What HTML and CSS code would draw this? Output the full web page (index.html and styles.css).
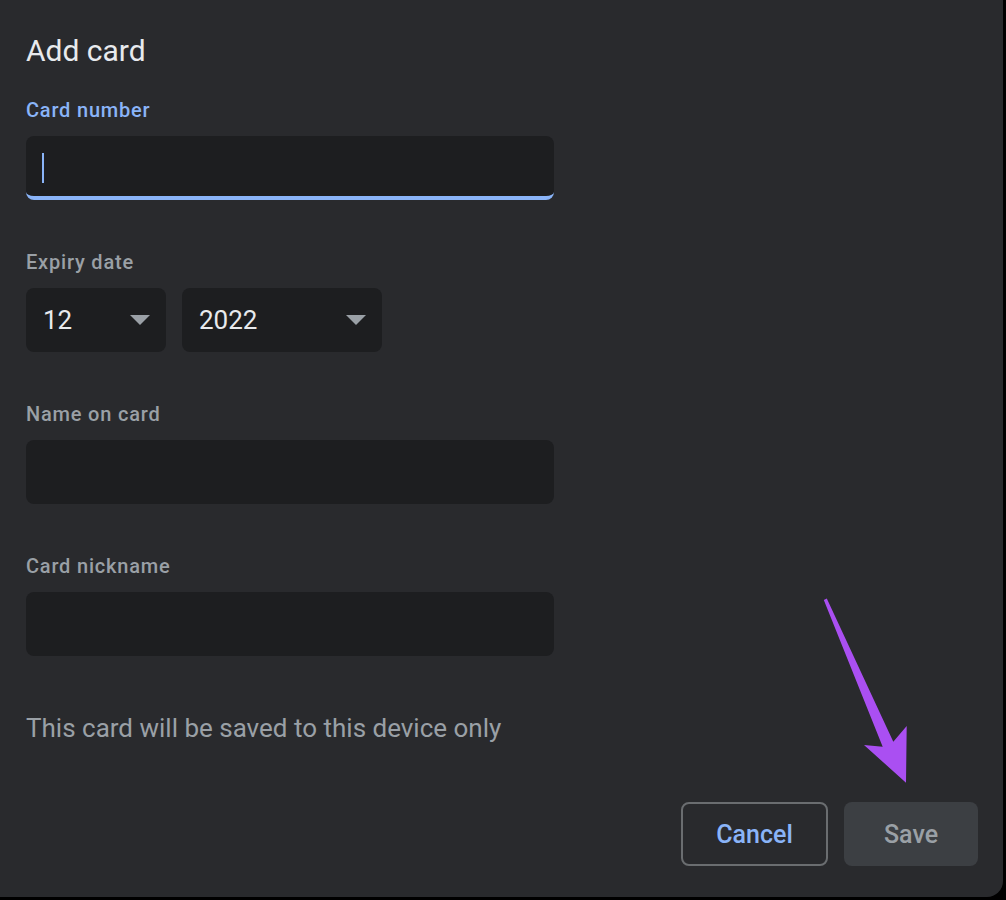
FILE: index.html
```html
<!DOCTYPE html>
<html>
<head>
<meta charset="utf-8">
<link rel="stylesheet" href="styles.css">
</head>
<body>
<div class="dialog">
  <h1 class="title">Add card</h1>

  <div class="field">
    <label class="label label-active">Card number</label>
    <div class="input input-focused"><span class="caret"></span></div>
  </div>

  <div class="field">
    <label class="label">Expiry date</label>
    <div class="selects">
      <div class="select select-month"><span class="select-value">12</span><span class="select-arrow"></span></div>
      <div class="select select-year"><span class="select-value">2022</span><span class="select-arrow"></span></div>
    </div>
  </div>

  <div class="field">
    <label class="label">Name on card</label>
    <div class="input"></div>
  </div>

  <div class="field">
    <label class="label">Card nickname</label>
    <div class="input"></div>
  </div>

  <p class="note">This card will be saved to this device only</p>

  <div class="actions">
    <button class="btn btn-cancel">Cancel</button>
    <button class="btn btn-save">Save</button>
  </div>

  <svg class="annotation" width="1006" height="900" viewBox="0 0 1006 900">
    <path d="M823.8 600 L826.8 598.5 L893.3 741.7 L906.7 726 L906 782.7 L864 745 L882.7 746.7 Z" fill="#aa4ff2"/>
  </svg>
</div>
</body>
</html>
```

FILE: styles.css
```css
html, body {
  margin: 0;
  padding: 0;
  background: #000000;
}

body {
  width: 1006px;
  height: 900px;
  overflow: hidden;
  font-family: Roboto, "Liberation Sans", Arial, sans-serif;
}

.dialog {
  position: relative;
  box-sizing: border-box;
  width: 1003px;
  height: 897px;
  background: #292a2d;
  border-bottom-right-radius: 16px;
  padding: 33px 25px 0 26px;
  display: flex;
  flex-direction: column;
}

.title {
  margin: 0;
  font-size: 30px;
  line-height: 36px;
  font-weight: 400;
  color: #e8eaed;
}

.field {
  display: flex;
  flex-direction: column;
  gap: 14px;
  margin-top: 29px;
}

.field + .field {
  margin-top: 50px;
}

.label {
  font-size: 20px;
  line-height: 24px;
  font-weight: 500;
  letter-spacing: 0.8px;
  color: #9aa0a6;
}

.label-active {
  color: #8ab4f8;
}

.input {
  box-sizing: border-box;
  width: 528px;
  height: 64px;
  background: #1d1e20;
  border-radius: 8px;
  display: flex;
  align-items: center;
  padding-left: 16px;
}

.input-focused {
  border-bottom: 4px solid #8ab4f8;
  padding-top: 4px;
}

.caret {
  display: block;
  width: 2px;
  height: 30px;
  background: #8ab4f8;
}

.selects {
  display: flex;
  gap: 16px;
}

.select {
  box-sizing: border-box;
  height: 64px;
  background: #1d1e20;
  border-radius: 8px;
  display: flex;
  align-items: center;
  justify-content: space-between;
  padding: 0 16px 0 17px;
  color: #e8eaed;
  font-size: 26px;
}

.select-month {
  width: 140px;
}

.select-year {
  width: 200px;
}

.select-arrow {
  width: 0;
  height: 0;
  border-left: 10px solid transparent;
  border-right: 10px solid transparent;
  border-top: 10px solid #9aa0a6;
}

.note {
  margin: 56px 0 0;
  font-size: 26px;
  line-height: 32px;
  color: #9aa0a6;
}

.actions {
  display: flex;
  justify-content: flex-end;
  gap: 16px;
  margin-top: 58px;
}

.btn {
  box-sizing: border-box;
  height: 64px;
  border-radius: 8px;
  font-family: Roboto, "Liberation Sans", Arial, sans-serif;
  font-size: 25px;
  font-weight: 500;
  padding: 0;
}

.btn-cancel {
  width: 147px;
  background: transparent;
  border: 2px solid #6a6d70;
  color: #8ab4f8;
}

.btn-save {
  width: 134px;
  background: #3c3f43;
  border: none;
  color: #9aa0a6;
}

.annotation {
  position: absolute;
  left: 0;
  top: 0;
  pointer-events: none;
}
```
